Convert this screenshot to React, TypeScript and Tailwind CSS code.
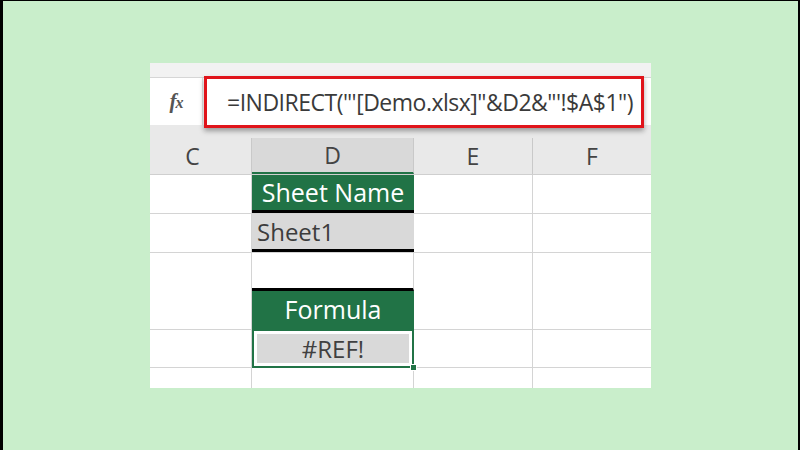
import React from "react";

const cols = [
  { key: "C", w: "w-[102px]" },
  { key: "D", w: "w-[162px]" },
  { key: "E", w: "w-[119px]" },
  { key: "F", w: "w-[118px]" },
];

const font = { fontFamily: '"Open Sans", "Noto Sans", sans-serif' };

const Row = ({ h, children }: { h: string; children?: React.ReactNode }) => (
  <div className={`flex ${h} border-b border-[#d4d4d4]`}>{children}</div>
);

const Blank = ({ w, last }: { w: string; last?: boolean }) => (
  <div className={`${w} h-full ${last ? "" : "border-r border-[#d4d4d4]"}`}></div>
);

const App: React.FC = () => {
  return (
    <div
      className="w-[800px] h-[450px] bg-[#c9eecb] border-l-[3px] border-t border-r-2 border-black flex items-center justify-center"
      style={font}
    >
      <div className="w-[501px] h-[325px] bg-white flex flex-col overflow-hidden relative">
        {/* ribbon strip */}
        <div className="h-[15px] bg-[#f2f2f2] border-b border-[#d6d6d6] shrink-0"></div>

        {/* formula bar */}
        <div className="h-[47px] flex shrink-0 bg-white relative">
          <div className="w-[53px] h-full flex items-center justify-center border-r border-[#e2e2e2]">
            <span
              className="text-[21px] text-[#555] italic font-bold tracking-[-1px]"
              style={{ fontFamily: '"Liberation Serif", serif' }}
            >
              f<span className="text-[16px]">x</span>
            </span>
          </div>
          <div className="flex-1 bg-white"></div>
          <div className="absolute left-[54px] top-[-2px] w-[440px] h-[52px] border-[3px] border-[#e0141b] shadow-[0_3px_5px_rgba(0,0,0,0.35)] flex items-center pl-[20px]">
            <span className="text-[23px] text-[#3a3a3a] whitespace-nowrap tracking-[-0.5px]">
              =INDIRECT("'[Demo.xlsx]"&D2&"'!$A$1")
            </span>
          </div>
        </div>

        {/* column headers */}
        <div className="h-[50px] bg-[#e9e9e9] flex flex-col shrink-0 border-b border-[#cfcfcf]">
          <div className="h-[16px]"></div>
          <div className="flex flex-1">
            {cols.map((c, i) => (
              <div
                key={c.key}
                className={`${c.w} h-full flex items-center justify-center text-[23px] text-[#444] ${
                  i < cols.length - 1 ? "border-r border-[#c9c9c9]" : ""
                } ${c.key === "D" ? "bg-[#d9d9d9] border-b-2 border-b-[#217346]" : ""} ${
                  c.key === "C" ? "pr-[16px]" : ""
                }`}
              >
                {c.key}
              </div>
            ))}
          </div>
        </div>

        {/* rows */}
        <Row h="h-[39px]">
          <Blank w="w-[102px]" />
          <div className="w-[162px] h-full bg-[#217346] border-b-[3px] border-black flex items-center justify-center text-white text-[25px]">
            Sheet Name
          </div>
          <Blank w="w-[119px]" />
          <Blank w="w-[118px]" last />
        </Row>
        <Row h="h-[39px]">
          <Blank w="w-[102px]" />
          <div className="w-[162px] h-full bg-[#d9d9d9] border-b-[3px] border-black flex items-center pl-[5px] text-[#3c3c3c] text-[24px]">
            Sheet1
          </div>
          <Blank w="w-[119px]" />
          <Blank w="w-[118px]" last />
        </Row>
        <div className="flex h-[38px]">
          <Blank w="w-[102px]" />
          <div className="w-[162px] h-full border-r border-[#d4d4d4] border-b-[3px] border-b-black"></div>
          <Blank w="w-[119px]" />
          <Blank w="w-[118px]" last />
        </div>
        <Row h="h-[39px]">
          <Blank w="w-[102px]" />
          <div className="w-[162px] h-full bg-[#217346] flex items-center justify-center text-white text-[25px]">
            Formula
          </div>
          <Blank w="w-[119px]" />
          <Blank w="w-[118px]" last />
        </Row>
        <Row h="h-[38px]">
          <Blank w="w-[102px]" />
          <div className="w-[162px] h-[39px] -mt-px border-2 border-[#217346] bg-white p-[3px] relative">
            <div className="w-full h-full bg-[#d9d9d9] flex items-center justify-center text-[#404040] text-[24px]">
              #REF!
            </div>
            <div className="absolute right-[-5px] bottom-[-5px] w-[7px] h-[7px] bg-[#217346] border border-white"></div>
          </div>
          <Blank w="w-[119px]" />
          <Blank w="w-[118px]" last />
        </Row>
        <div className="flex flex-1">
          <Blank w="w-[102px]" />
          <Blank w="w-[162px]" />
          <Blank w="w-[119px]" />
          <Blank w="w-[118px]" last />
        </div>
      </div>
    </div>
  );
};

export default App;
